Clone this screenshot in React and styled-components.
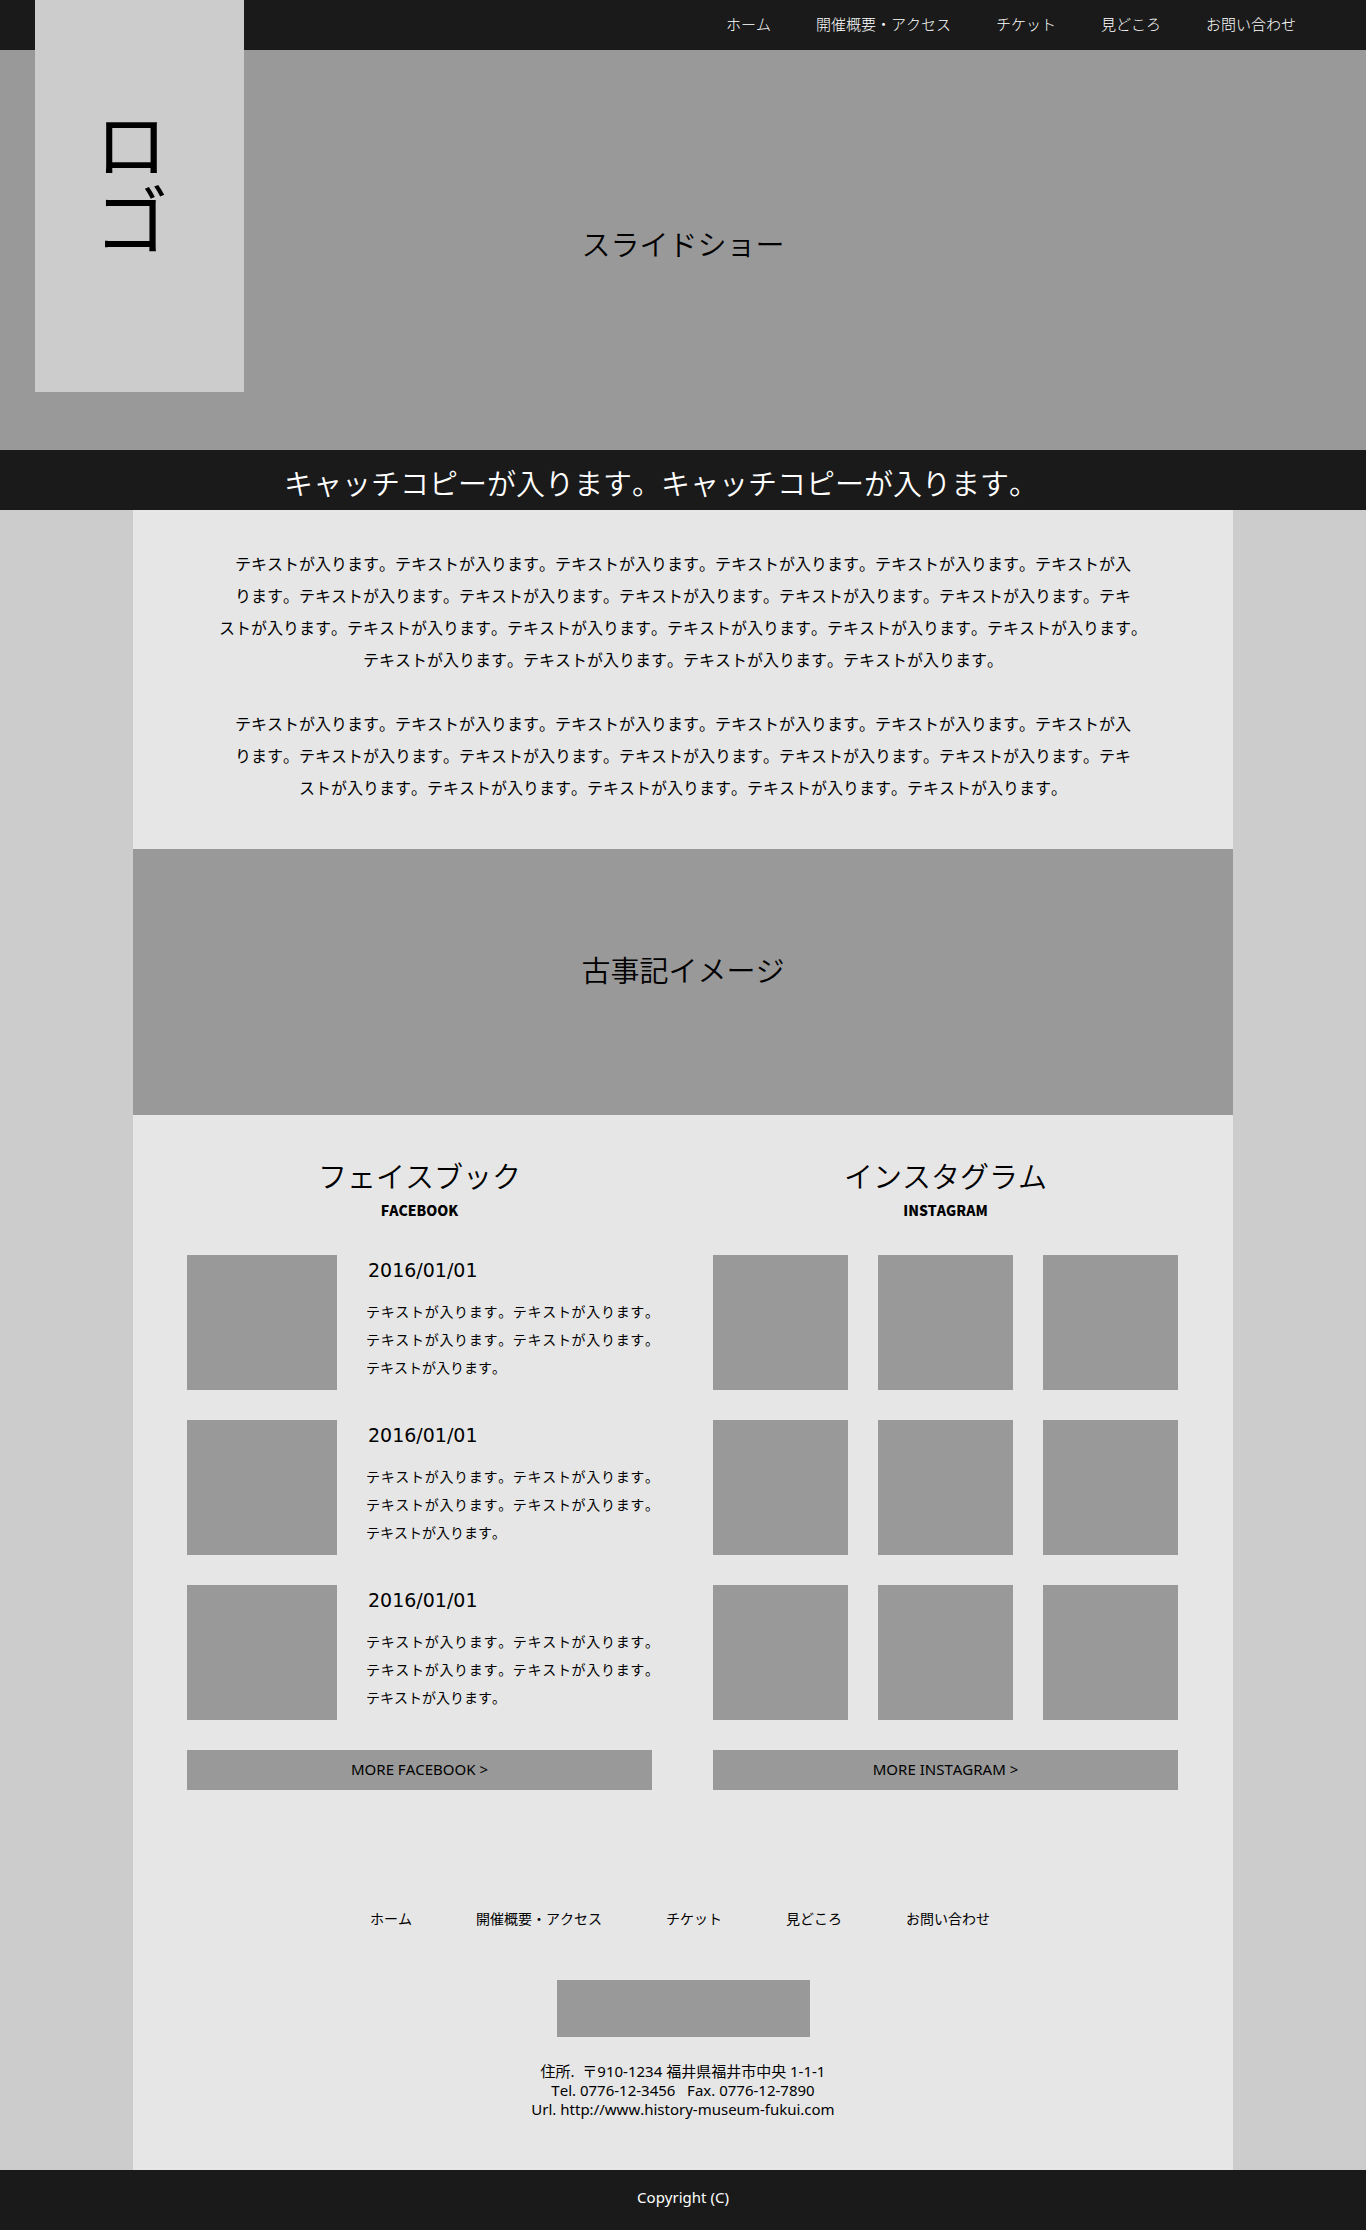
import React from "react";
import styled, { createGlobalStyle } from "styled-components";

const latin = `"Noto Sans", "Noto Sans CJK JP", sans-serif`;
const gothic = `"Noto Sans CJK JP", "Noto Sans", sans-serif`;

const GlobalStyle = createGlobalStyle`
  *, *::before, *::after { box-sizing: border-box; }
  body {
    margin: 0;
    background: #ccc;
    color: #000;
    font-family: ${latin};
    font-size: 15px;
    font-kerning: none;
  }
  h1, h2, h3, p, ul, address { margin: 0; padding: 0; }
  a { color: inherit; text-decoration: none; }
`;

const Header = styled.header`
  position: relative;
  z-index: 1;
  display: flex;
  justify-content: flex-end;
  height: 50px;
  padding: 0 70px 2px;
  background: #1a1a1a;
`;

const Logo = styled.h1`
  position: absolute;
  top: 0;
  left: 35px;
  display: flex;
  align-items: center;
  justify-content: center;
  width: 209px;
  height: 392px;
  padding: 0 16px 26px 0;
  background: #ccc;
  font-family: ${gothic};
  font-size: 76px;
  font-weight: 400;
  line-height: 76px;
  writing-mode: vertical-rl;
`;

const NavList = styled.ul`
  display: flex;
  flex-wrap: wrap;
  align-items: center;
  justify-content: center;
  gap: ${(p) => p.$gap}px;
  height: 100%;
  list-style: none;
  color: ${(p) => p.$color};
  font-family: ${gothic};
  font-size: ${(p) => p.$size}px;
  font-weight: ${(p) => p.$weight};
  line-height: 20px;
`;

const Placeholder = styled.section`
  display: flex;
  align-items: center;
  justify-content: center;
  height: ${(p) => p.$height}px;
  padding-bottom: ${(p) => p.$lift}px;
  background: #999;
`;

const Title = styled.h2`
  font-family: ${gothic};
  font-size: 29px;
  font-weight: 350;
  line-height: 40px;
  text-align: center;
`;

const Catch = styled.section`
  display: flex;
  align-items: center;
  justify-content: center;
  min-height: 60px;
  padding: 4px 44px 0 0;
  background: #1a1a1a;
  color: #fff;
`;

const Main = styled.main`
  max-width: 1100px;
  margin: 0 auto;
  background: #e6e6e6;
`;

const Lead = styled.section`
  display: grid;
  gap: 32px;
  padding: 37px 0 46px;
  font-family: ${gothic};
  font-size: 16px;
  line-height: 32px;
  text-align: center;
`;

const Feeds = styled.div`
  display: grid;
  grid-template-columns: 1fr 1fr;
  gap: 61px;
  padding: 40px 55px 0 54px;
`;

const Feed = styled.section`
  display: flex;
  flex-direction: column;
`;

const Sub = styled.p`
  margin: 2px 0 32px;
  font-family: ${gothic};
  font-size: 14px;
  font-weight: 900;
  line-height: 26px;
  text-align: center;
`;

const Posts = styled.div`
  display: grid;
  gap: 30px;
`;

const Post = styled.article`
  display: grid;
  grid-template-columns: 150px 1fr;
  gap: 29px;
  height: 135px;
`;

const Thumb = styled.div`
  height: 135px;
  background: #999;
`;

const PostText = styled.div`
  margin-right: -7px;
  font-family: ${gothic};
  font-size: 14px;
  line-height: 28px;
  text-align: justify;
`;

const PostDate = styled.h3`
  margin: 1px 0 13px 2px;
  font-family: "DejaVu Sans", ${latin};
  font-size: 19px;
  font-weight: 400;
  line-height: 28px;
`;

const Photos = styled.div`
  display: grid;
  grid-template-columns: repeat(3, 1fr);
  gap: 30px;
`;

const More = styled.a`
  display: block;
  margin-top: 30px;
  padding-bottom: 2px;
  background: #999;
  line-height: 38px;
  text-align: center;
`;

const Foot = styled.footer`
  display: flex;
  flex-direction: column;
  align-items: center;
  padding: 118px 0 51px;
`;

const FootNav = styled.nav`
  padding-right: 6px;
`;

const Banner = styled.div`
  width: 253px;
  height: 57px;
  margin: 52px 0 25px;
  background: #999;
`;

const Address = styled.address`
  font-style: normal;
  line-height: 19px;
  text-align: center;
  white-space: pre;
`;

const Copyright = styled.p`
  padding: 17px 0 23px;
  background: #1a1a1a;
  color: #fff;
  line-height: 20px;
  text-align: center;
`;

const links = ["ホーム", "開催概要・アクセス", "チケット", "見どころ", "お問い合わせ"];
const s = "テキストが入ります。";

const Nav = (props) => (
  <NavList {...props}>
    {links.map((l) => (
      <li key={l}>
        <a href="#">{l}</a>
      </li>
    ))}
  </NavList>
);

export default function App() {
  return (
    <>
      <GlobalStyle />
      <Header>
        <Logo>ロゴ</Logo>
        <nav>
          <Nav $gap={45} $size={15} $weight={300} $color="#fff" />
        </nav>
      </Header>
      <Placeholder $height={400} $lift={14}>
        <Title>スライドショー</Title>
      </Placeholder>
      <Catch>
        <Title as="p">キャッチコピーが入ります。キャッチコピーが入ります。</Title>
      </Catch>
      <Main>
        <Lead>
          <p>
            {s.repeat(5)}テキストが入
            <br />
            ります。{s.repeat(5)}テキ
            <br />
            ストが入ります。{s.repeat(5)}
            <br />
            {s.repeat(4)}
          </p>
          <p>
            {s.repeat(5)}テキストが入
            <br />
            ります。{s.repeat(5)}テキ
            <br />
            ストが入ります。{s.repeat(4)}
          </p>
        </Lead>
        <Placeholder $height={266} $lift={26}>
          <Title>古事記イメージ</Title>
        </Placeholder>
        <Feeds>
          <Feed>
            <Title>フェイスブック</Title>
            <Sub>FACEBOOK</Sub>
            <Posts>
              {[0, 1, 2].map((i) => (
                <Post key={i}>
                  <Thumb />
                  <PostText>
                    <PostDate>2016/01/01</PostDate>
                    <p>{s.repeat(5)}</p>
                  </PostText>
                </Post>
              ))}
            </Posts>
            <More href="#">MORE FACEBOOK &gt;</More>
          </Feed>
          <Feed>
            <Title>インスタグラム</Title>
            <Sub>INSTAGRAM</Sub>
            <Photos>
              {Array.from({ length: 9 }, (_, i) => (
                <Thumb key={i} />
              ))}
            </Photos>
            <More href="#">MORE INSTAGRAM &gt;</More>
          </Feed>
        </Feeds>
        <Foot>
          <FootNav>
            <Nav $gap={64} $size={14} $weight={400} $color="#000" />
          </FootNav>
          <Banner />
          <Address>
            {"住所.  〒910-1234 福井県福井市中央 1-1-1"}
            <br />
            {"Tel. 0776-12-3456   Fax. 0776-12-7890"}
            <br />
            Url. <a href="#">http://www.history-museum-fukui.com</a>
          </Address>
        </Foot>
      </Main>
      <Copyright>Copyright (C)</Copyright>
    </>
  );
}
